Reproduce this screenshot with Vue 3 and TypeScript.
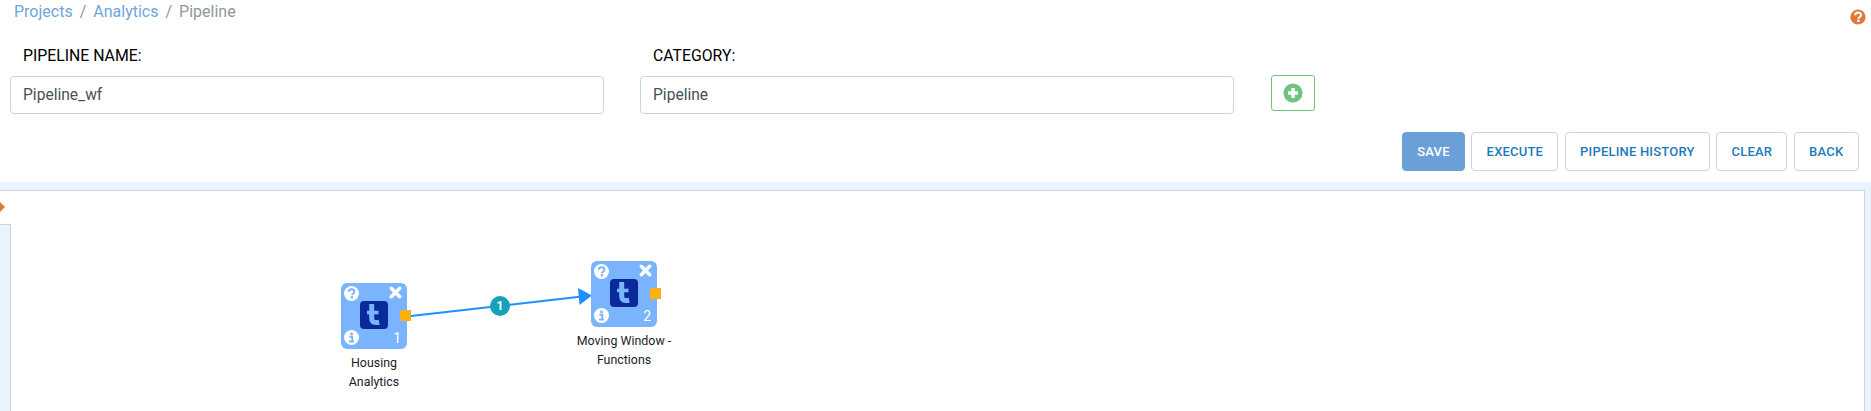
<script setup lang="ts">
interface PipelineNode {
  id: number
  x: number
  y: number
  label: string[]
}

const crumbs: string[] = ['Projects', 'Analytics']
const actions: string[] = ['Execute', 'Pipeline History', 'Clear', 'Back']
const nodes: PipelineNode[] = [
  { id: 1, x: 341, y: 92, label: ['Housing', 'Analytics'] },
  { id: 2, x: 591, y: 70, label: ['Moving Window -', 'Functions'] },
]
</script>

<template>
  <div class="page">
    <nav class="crumbs">
      <template v-for="c in crumbs" :key="c">
        <span class="crumb-link">{{ c }}</span>
        <span class="crumb-sep">/</span>
      </template>
      <span class="crumb-current">Pipeline</span>
    </nav>

    <svg class="help" viewBox="0 0 16 16" aria-label="help">
      <circle cx="8" cy="8" r="7.6" fill="#e0783a" />
      <path d="M5.2 6.2C5.3 4.6 6.5 3.6 8 3.6c1.7 0 3 1 3 2.5 0 2.1-2.5 2-2.5 3.6" fill="none" stroke="#fff" stroke-width="2" />
      <rect x="7.2" y="10.6" width="2.4" height="2.4" fill="#fff" />
    </svg>

    <div class="form-row">
      <div class="field">
        <label class="field-label">PIPELINE NAME:</label>
        <div class="input">Pipeline_wf</div>
      </div>
      <div class="field">
        <label class="field-label">CATEGORY:</label>
        <div class="input">Pipeline</div>
      </div>
      <button class="add">
        <svg viewBox="0 0 20 20" width="20" height="20">
          <circle cx="10" cy="10" r="9.6" fill="#71c27e" />
          <path d="M10 5v10M5 10h10" stroke="#fff" stroke-width="3.4" />
        </svg>
      </button>
    </div>

    <div class="actions">
      <button class="btn btn-primary">Save</button>
      <button v-for="a in actions" :key="a" class="btn">{{ a }}</button>
    </div>

    <section class="band">
      <div class="canvas">
        <span class="diamond"></span>
        <div class="side-panel"></div>

        <svg class="edges" width="1871" height="220">
          <line x1="411" y1="125" x2="582" y2="105.5" stroke="#1e90ff" stroke-width="2" />
          <polygon points="592,104.5 578,97 579.5,114" fill="#1e90ff" />
        </svg>
        <span class="edge-badge">1</span>

        <div
          v-for="n in nodes"
          :key="n.id"
          class="node"
          :style="{ left: n.x + 'px', top: n.y + 'px' }"
        >
          <div class="tile">
            <svg class="ico ico-q" viewBox="0 0 16 16">
              <circle cx="8" cy="8" r="8" fill="#fff" />
              <path d="M5 6.2C5.1 4.5 6.4 3.4 8 3.4c1.8 0 3.1 1.1 3.1 2.6 0 2.2-2.6 2.1-2.6 3.8" fill="none" stroke="#7ab4ff" stroke-width="2" />
              <rect x="7.2" y="10.8" width="2.5" height="2.4" fill="#7ab4ff" />
            </svg>
            <svg class="ico ico-x" viewBox="0 0 14 14">
              <path d="M2.5 2.5l9 9M11.5 2.5l-9 9" stroke="#fff" stroke-width="3.8" stroke-linecap="round" />
            </svg>
            <svg class="ico ico-i" viewBox="0 0 16 16">
              <circle cx="8" cy="8" r="8" fill="#fff" />
              <rect x="6.7" y="2.8" width="2.7" height="2.7" fill="#7ab4ff" />
              <path d="M5.8 7.2h3v5M5.4 12.2h5.2" fill="none" stroke="#7ab4ff" stroke-width="2" />
            </svg>
            <svg class="logo" viewBox="0 0 28 28">
              <rect width="28" height="28" rx="4" fill="#0a2a9c" />
              <path d="M11.7 3v14c0 4.2 2.4 5.2 7.5 4.2" fill="none" stroke="#7ab4ff" stroke-width="5" />
              <path d="M7 11.5h11.5" fill="none" stroke="#7ab4ff" stroke-width="3.6" />
            </svg>
            <span class="num">{{ n.id }}</span>
          </div>
          <span class="handle"></span>
          <div class="node-label">
            <div v-for="l in n.label" :key="l">{{ l }}</div>
          </div>
        </div>
      </div>
    </section>
  </div>
</template>

<style>
html, body { margin: 0; background: #fff; overflow: hidden; }
</style>

<style scoped>
.page {
  position: relative;
  width: 1871px;
  height: 411px;
  overflow: hidden;
  font-family: Roboto, "Liberation Sans", sans-serif;
  background: #fff;
  display: flex;
  flex-direction: column;
}
.crumbs {
  height: 24px;
  line-height: 24px;
  padding-left: 14px;
  font-size: 16px;
  display: flex;
  gap: 7px;
}
.crumb-link { color: #6ca6dc; }
.crumb-sep, .crumb-current { color: #8f979e; }
.help {
  position: absolute;
  left: 1850px;
  top: 9px;
  width: 16px;
  height: 16px;
}
.form-row {
  display: flex;
  align-items: flex-end;
  gap: 36px;
  padding-left: 10px;
  margin-top: 22px;
}
.field { width: 594px; }
.field-label {
  display: block;
  height: 20px;
  line-height: 20px;
  padding-left: 13px;
  font-size: 15.8px;
  font-weight: 400;
  color: #000;
}
.input {
  box-sizing: border-box;
  margin-top: 10px;
  height: 38px;
  line-height: 36px;
  padding-left: 12px;
  border: 1px solid #ced4da;
  border-radius: 4px;
  font-size: 15.6px;
  color: #495057;
}
.add {
  box-sizing: border-box;
  width: 44px;
  height: 36px;
  margin: 0 0 3px 1px;
  padding: 0;
  background: #fff;
  border: 1px solid #71c27e;
  border-radius: 3px;
  display: flex;
  align-items: center;
  justify-content: center;
}
.actions {
  display: flex;
  justify-content: flex-end;
  gap: 6.5px;
  padding-right: 12.5px;
  margin-top: 18px;
}
.btn {
  box-sizing: border-box;
  height: 39px;
  padding: 0 14.2px;
  background: #fff;
  border: 1px solid #ced4da;
  border-radius: 4px;
  font-family: inherit;
  font-size: 13px;
  font-weight: 500;
  letter-spacing: 0.2px;
  text-transform: uppercase;
  color: #1b7bbd;
}
.btn-primary {
  background: #6a9fd8;
  border-color: #6a9fd8;
  color: #fff;
}
.band {
  flex: 1;
  margin-top: 11px;
  padding: 8px 6.5px 0 0;
  background: #e8f3fd;
  display: flex;
}
.canvas {
  position: relative;
  flex: 1;
  margin: 0 0 -10px -1px;
  background: #fff;
  border: 1px solid #ced4da;
}
.diamond {
  position: absolute;
  left: -5px;
  top: 11px;
  width: 10px;
  height: 10px;
  background: #e0783a;
  clip-path: polygon(50% 0, 100% 50%, 50% 100%, 0 50%);
}
.side-panel {
  position: absolute;
  left: 0;
  top: 33px;
  bottom: 0;
  width: 10px;
  background: #e8f3fd;
  border-top: 1px solid #ced4da;
  border-right: 1px solid #ced4da;
}
.edges {
  position: absolute;
  left: 0;
  top: 0;
}
.edge-badge {
  position: absolute;
  left: 490px;
  top: 105px;
  width: 20px;
  height: 20px;
  border-radius: 50%;
  background: #17a2b8;
  color: #fff;
  font-size: 12px;
  font-weight: 700;
  line-height: 20px;
  text-align: center;
}
.node {
  position: absolute;
  width: 66px;
}
.tile {
  position: relative;
  width: 66px;
  height: 66px;
  border-radius: 6px;
  background: #7ab4ff;
}
.ico { position: absolute; }
.ico-q { left: 3px; top: 3px; width: 15px; height: 15px; }
.ico-x { left: 48px; top: 3px; width: 13px; height: 13px; }
.ico-i { left: 3px; top: 47px; width: 15px; height: 15px; }
.logo {
  position: absolute;
  left: 19px;
  top: 18px;
  width: 28px;
  height: 28px;
}
.num {
  position: absolute;
  right: 6px;
  bottom: 2px;
  font-size: 14px;
  line-height: 18px;
  color: #fff;
}
.handle {
  position: absolute;
  left: 59px;
  top: 27px;
  box-sizing: border-box;
  width: 11px;
  height: 11px;
  background: #ffb300;
  border: 1px solid #f5a742;
}
.node-label {
  position: absolute;
  left: -27px;
  right: -27px;
  top: 70px;
  font-size: 12.4px;
  line-height: 19px;
  text-align: center;
  color: #1c1c2a;
}
</style>
